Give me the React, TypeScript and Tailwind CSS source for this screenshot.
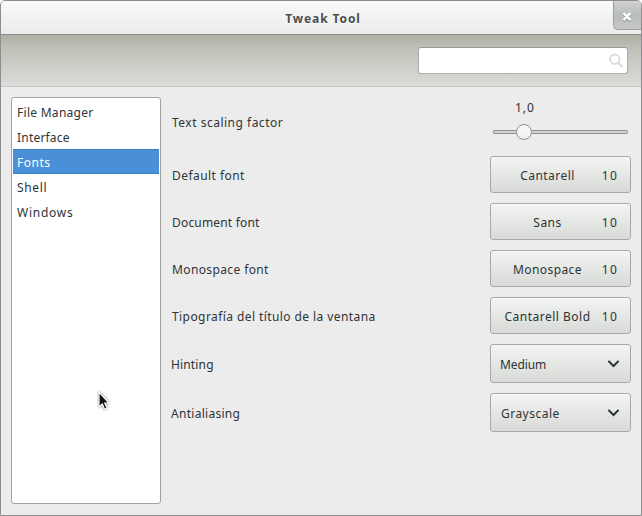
import type { ReactNode } from "react";

const categories = [
  { name: "File Manager", tracking: "tracking-[0.28px]" },
  { name: "Interface", tracking: "tracking-[0.2px]" },
  { name: "Fonts", tracking: "tracking-[0.5px]" },
  { name: "Shell", tracking: "tracking-[0.65px]" },
  { name: "Windows", tracking: "tracking-[0.75px]" },
];

const buttonLook =
  "flex w-[141px] shrink-0 items-center rounded-[3px] border border-[#a6a9a6] bg-gradient-to-b from-[#f3f5f2] to-[#d8dad7] shadow-[inset_0_1px_0_#f7f8f6]";

function Row({ label, tracking, children }: { label: string; tracking: string; children: ReactNode }) {
  return (
    <div className="flex items-center justify-between">
      <span className={`pt-0.5 whitespace-nowrap ${tracking}`}>{label}</span>
      {children}
    </div>
  );
}

function FontButton({ font, tracking }: { font: string; tracking: string }) {
  return (
    <button className={`${buttonLook} h-[37px] pt-0.5 pr-3`}>
      <span className={`ml-[7px] w-[99px] text-center whitespace-nowrap ${tracking}`}>{font}</span>
      <span className="ml-auto tracking-[1.2px]">10</span>
    </button>
  );
}

function Combo({ value, tracking }: { value: string; tracking: string }) {
  return (
    <button className={`${buttonLook} h-[39px] justify-between pr-[11px] pl-[9px]`}>
      <span className={`pt-0.5 ${tracking}`}>{value}</span>
      <svg width="12" height="8" viewBox="0 0 12 8" fill="none" stroke="#2e3436" strokeWidth="2">
        <path d="M2 1.5 L6.5 6 L11 1.5" strokeLinecap="round" />
      </svg>
    </button>
  );
}

function TitleBar() {
  return (
    <header className="relative flex h-[34px] shrink-0 items-center justify-center border-b border-[#8b8d88] bg-gradient-to-b from-[#fafafa] to-[#ebebeb] text-[12px] font-bold tracking-[0.9px] text-[#494e50]">
      <span className="pt-0.5 pl-1 [text-shadow:0_1px_0_#fff]">Tweak Tool</span>
      <button className="absolute top-0 right-0 flex h-[29px] w-7 items-center justify-center rounded-bl-[5px] border-b border-l border-[#9a9d9e] bg-gradient-to-b from-[#d0d2d2] via-[#b9bcbd] to-[#c6c8c8] pt-[3px] pr-0.5">
        <svg width="10" height="10" viewBox="0 0 10 10" fill="none" strokeWidth="2.5">
          <path d="M1.5 2 L8.5 9 M8.5 2 L1.5 9" stroke="#858889" />
          <path d="M1.5 1.2 L8.5 8.2 M8.5 1.2 L1.5 8.2" stroke="#fff" />
        </svg>
      </button>
    </header>
  );
}

export default function App() {
  return (
    <div className="h-[516px] w-[642px] bg-white">
      <div className="relative flex h-full flex-col overflow-hidden rounded-t-[5px] border border-[#8d8d8d] bg-[#ececec] font-['Noto_Sans','Open_Sans',sans-serif] text-[12px] leading-4 text-[#2e3436]">
        <TitleBar />
        <div className="flex h-[52px] shrink-0 justify-end border-b border-[#c5c5c3] bg-gradient-to-b from-[#aeafa3] via-[#bcbdb3] via-20% to-[#dcddda] pt-3 pr-[13px]">
          <div className="flex h-[27px] w-[210px] items-center justify-end rounded-[3px] border border-[#aeafab] border-t-[#999a94] bg-white pr-[3px]">
            <svg width="16" height="16" viewBox="0 0 16 16" fill="none" stroke="#dcdcdc">
              <circle cx="6.8" cy="6.2" r="4.7" strokeWidth="2" />
              <path d="M10.2 9.8 L14.6 14.2" strokeWidth="2.4" />
            </svg>
          </div>
        </div>
        <main className="flex min-h-0 flex-1 gap-2.5 p-2.5 pb-[11px]">
          <nav className="w-[150px] shrink-0 rounded-[3px] border border-[#a2a2a2] bg-white p-px">
            {categories.map((c) => (
              <div
                key={c.name}
                className={`flex h-[25px] items-center border-y pt-0.5 pl-1 ${c.tracking} ${
                  c.name === "Fonts" ? "border-[#3b7cc4] bg-[#4a90d9] text-white" : "border-transparent"
                }`}
              >
                {c.name}
              </div>
            ))}
          </nav>
          <section className="flex w-[460px] flex-col gap-2.5">
            <Row label="Text scaling factor" tracking="pl-px tracking-[0.5px]">
              <div className="flex h-[49px] w-[141px] flex-col">
                <span className="mt-[3px] ml-[24px] pl-px tracking-[1px]">1,0</span>
                <div className="mt-[8px] mr-[3px] ml-[3px] flex h-4 items-center">
                  <div className="h-1 w-[23px] rounded-l-sm border border-r-0 border-[#8b8d88] bg-[#d3d4d0]" />
                  <div className="size-4 shrink-0 rounded-full border border-[#8f918c] bg-gradient-to-b from-[#fbfbfa] to-[#eeeeec]" />
                  <div className="h-1 flex-1 rounded-r-sm border border-l-0 border-[#8b8d88] bg-[#d3d4d0]" />
                </div>
              </div>
            </Row>
            <Row label="Default font" tracking="pl-px tracking-[0.45px]">
              <FontButton font="Cantarell" tracking="tracking-[0.45px]" />
            </Row>
            <Row label="Document font" tracking="pl-px tracking-[0.18px]">
              <FontButton font="Sans" tracking="tracking-[0.45px]" />
            </Row>
            <Row label="Monospace font" tracking="pl-px tracking-[0.38px]">
              <FontButton font="Monospace" tracking="tracking-[0.42px]" />
            </Row>
            <Row label="Tipografía del título de la ventana" tracking="pl-px tracking-[0.42px]">
              <FontButton font="Cantarell Bold" tracking="tracking-[0.5px]" />
            </Row>
            <Row label="Hinting" tracking="tracking-[0.15px]">
              <Combo value="Medium" tracking="tracking-[-0.1px]" />
            </Row>
            <Row label="Antialiasing" tracking="tracking-[0.28px]">
              <Combo value="Grayscale" tracking="pl-px tracking-[0.48px]" />
            </Row>
          </section>
        </main>
        <svg className="absolute top-[389px] left-[96px]" width="14" height="22" viewBox="0 0 14 22">
          <path
            d="M2 2 V17 L5.3 14 L7.6 19.2 L10 18.1 L7.8 13 H12 Z"
            fill="#111"
            stroke="#fff"
            strokeWidth="1.2"
            className="[filter:drop-shadow(0_0_1px_rgb(0_0_0/0.55))]"
          />
        </svg>
      </div>
    </div>
  );
}
